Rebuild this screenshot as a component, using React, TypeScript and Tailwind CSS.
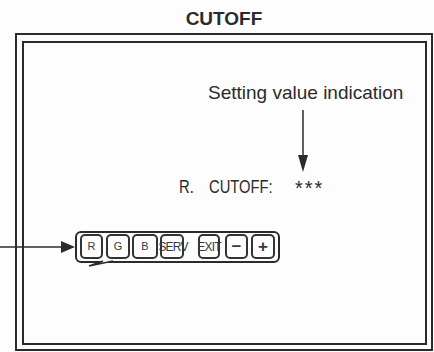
import React from "react";

const keys = [
  { label: "R", w: "w-[23px]", ml: "ml-0", txt: "text-[11px]" },
  { label: "G", w: "w-[24px]", ml: "ml-[3px]", txt: "text-[11px]" },
  { label: "B", w: "w-[26px]", ml: "ml-[2px]", txt: "text-[11px]" },
  { label: "SERV", w: "w-[24px]", ml: "ml-[2px]", txt: "text-[12px] tracking-[-0.8px] pl-[2px]" },
  { label: "EXIT", w: "w-[22px]", ml: "ml-[14px]", txt: "text-[12px] tracking-[-0.8px]" },
  { label: "−", w: "w-[23px]", ml: "ml-[5px]", txt: "text-[17px] font-bold" },
  { label: "+", w: "w-[24px]", ml: "ml-[3px]", txt: "text-[17px] font-bold" },
];

export default function App() {
  return (
    <div className="relative w-[434px] h-[352px] bg-[#fdfdfd] text-[#2b2b2b] font-['Liberation_Sans',Arial,sans-serif] overflow-hidden">
      {/* title */}
      <div className="h-[33px] pt-[9px] ml-[15px] w-[418px] text-center text-[19px] leading-[19px] font-bold">
        CUTOFF
      </div>

      {/* screen frame */}
      <div className="ml-[15px] w-[418px] h-[318px] border-2 border-[#2b2b2b]">
        <div className="ml-[5px] mt-[6px] w-[405px] h-[304px] border-2 border-[#2b2b2b] flex flex-col">
          <div className="mt-[40px] pl-[184px] text-[19px] leading-[19px] whitespace-nowrap">
            Setting value indication
          </div>

          <svg className="ml-[273px] mt-[8px]" width="12" height="62" viewBox="0 0 12 62">
            <line x1="6" y1="0" x2="6" y2="50" stroke="#2b2b2b" strokeWidth="1.5" />
            <polygon points="1,45 11,45 6,62" fill="#2b2b2b" />
          </svg>

          <div className="mt-[6px] flex items-start text-[18px] leading-[18px] whitespace-nowrap">
            <span className="ml-[155px] w-[30px] inline-block origin-left scale-x-[0.82]">R.</span>
            <span className="w-[86px] inline-block origin-left scale-x-[0.82]">CUTOFF:</span>
            <span className="inline-block text-[20px] leading-[20px] tracking-[2px]">***</span>
          </div>

          {/* key bar */}
          <div className="relative ml-[51px] mt-[33px] w-[205px] h-[32px] border-2 border-[#2b2b2b] rounded-[6px] bg-[#fdfdfd] flex pl-[3px] pt-[1px]">
            {keys.map((k) => (
              <div
                key={k.label}
                className={`${k.w} ${k.ml} h-[25px] border-2 border-[#333] rounded-[5px] flex items-center justify-center leading-none text-[#3a3a3a] overflow-visible ${k.txt}`}
              >
                {k.label}
              </div>
            ))}
            <svg className="absolute left-[6px] top-[26px]" width="32" height="10" viewBox="0 0 32 10">
              <polyline points="30,2 6,7 20,2" fill="#fdfdfd" stroke="#2b2b2b" strokeWidth="1.5" />
            </svg>
          </div>
        </div>
      </div>

      {/* pointer from the left */}
      <svg className="absolute left-0 top-[241px]" width="77" height="12" viewBox="0 0 77 12">
        <line x1="0" y1="6" x2="65" y2="6" stroke="#2b2b2b" strokeWidth="1.5" />
        <polygon points="61,0 75,6 61,12" fill="#2b2b2b" />
      </svg>
    </div>
  );
}
